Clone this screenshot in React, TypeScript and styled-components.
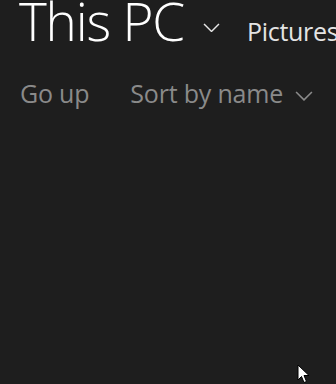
import React from 'react'
import styled, { createGlobalStyle } from 'styled-components'

const Global = createGlobalStyle`
  html, body {
    margin: 0;
    padding: 0;
    background: #1e1e1e;
  }
  body {
    font-family: "Open Sans", "Segoe UI", sans-serif;
  }
`

function Chevron({ width, color }: { width: number; color: string }) {
  return (
    <svg width={width} height={width * 0.55} viewBox="0 0 18 10" fill="none">
      <path d="M1 1 L9 9 L17 1" stroke={color} strokeWidth={1.6} />
    </svg>
  )
}

export default function App() {
  return (
    <Page>
      <Global />
      <Header>
        <Title>This PC</Title>
        <HeaderChevron>
          <Chevron width={17} color="#e6e6e6" />
        </HeaderChevron>
        <Crumb>Pictures</Crumb>
      </Header>
      <Toolbar>
        <ToolButton>Go up</ToolButton>
        <ToolButton>
          Sort by name
          <ToolChevron>
            <Chevron width={18} color="#8a8a8a" />
          </ToolChevron>
        </ToolButton>
      </Toolbar>
      <Cursor width="14" height="20" viewBox="0 0 14 20">
        <path d="M1 1 L1 16 L4.5 12.5 L7 18.5 L9.5 17.5 L7 11.5 L12 11.5 Z" fill="#fff" stroke="#000" strokeWidth="1" />
      </Cursor>
    </Page>
  )
}

const Page = styled.div`
  position: relative;
  width: 336px;
  height: 384px;
  background: #1e1e1e;
  overflow: hidden;
  padding-left: 19px;
  box-sizing: border-box;
`

const Header = styled.div`
  display: flex;
  align-items: baseline;
  margin-top: -6px;
  white-space: nowrap;
`

const Title = styled.h1`
  margin: 0;
  font-size: 53px;
  line-height: 53px;
  font-weight: 300;
  color: #ffffff;
  letter-spacing: -1.2px;
`

const HeaderChevron = styled.span`
  display: flex;
  align-self: flex-start;
  margin: 29px 0 0 19px;
`

const Crumb = styled.span`
  margin-left: 27px;
  font-size: 25px;
  color: #e4e4e4;
  letter-spacing: -0.3px;
`

const Toolbar = styled.div`
  display: flex;
  align-items: center;
  gap: 41px;
  margin-top: 33px;
  padding-left: 1px;
`

const ToolButton = styled.span`
  display: flex;
  align-items: center;
  gap: 12px;
  font-size: 25px;
  line-height: 25px;
  color: #8a8a8a;
  white-space: nowrap;
  letter-spacing: -0.2px;
`

const ToolChevron = styled.span`
  display: flex;
  margin-top: 5px;
`

const Cursor = styled.svg`
  position: absolute;
  left: 297px;
  top: 364px;
`
